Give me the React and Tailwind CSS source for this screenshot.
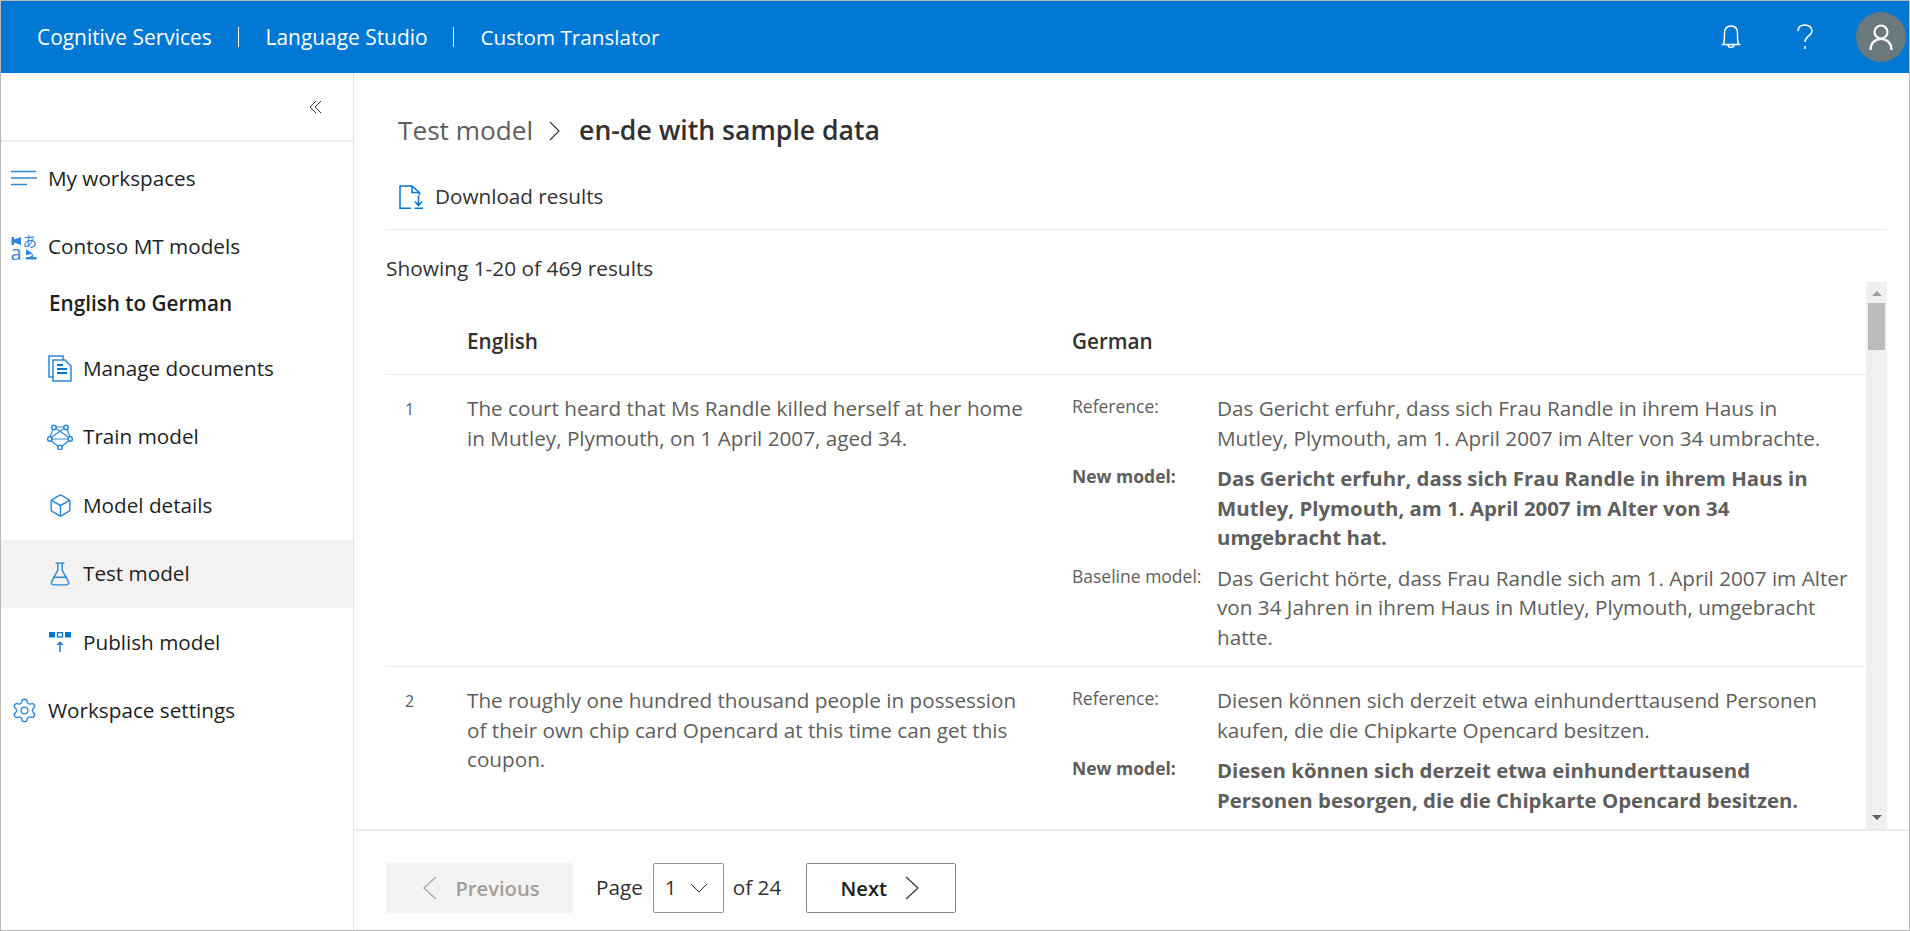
import React from "react"
import { Settings, Box, FlaskConical } from "lucide-react"

const Chevron = ({ w, h, dir = "right", color = "#323130", sw = 1.2, className = "" }) => {
  const paths = {
    right: `M1 1L${w - 1} ${h / 2}L1 ${h - 1}`,
    left: `M${w - 1} 1L1 ${h / 2}L${w - 1} ${h - 1}`,
    down: `M1 1L${w / 2} ${h - 1}L${w - 1} 1`,
  }
  return (
    <svg width={w} height={h} viewBox={`0 0 ${w} ${h}`} fill="none" stroke={color} strokeWidth={sw} className={className}>
      <path d={paths[dir]} />
    </svg>
  )
}

const NavIcon = ({ name }) => {
  if (name === "workspaces") {
    return (
      <svg width="26" height="16" viewBox="0 0 26 16" fill="none" stroke="#2b88d8" strokeWidth="1.6">
        <path d="M0 1.5H25M0 8H26M0 14.5H16" />
      </svg>
    )
  }
  if (name === "translate") {
    return (
      <svg width="26" height="26" viewBox="0 0 26 26" fill="#2b88d8" className="overflow-visible">
        <path d="M0.5 3H3V5.5L10 3V11L3 8.5V11H0.5Z" />
        <text x="11.5" y="12.5" fontSize="14.5" fontFamily="'Noto Sans CJK JP',sans-serif">あ</text>
        <text x="-0.5" y="25.5" fontSize="20" fontFamily="'Open Sans',sans-serif">a</text>
        <path d="M25.5 14V25.5H15V23H19L22 20V23H25.5V14ZM15 15L22 20L15 21Z" />
      </svg>
    )
  }
  if (name === "documents") {
    return (
      <svg width="24" height="27" viewBox="0 0 24 27" fill="none" stroke="#2b88d8" strokeWidth="1.5">
        <path d="M1 1H15V22H1Z" />
        <path d="M5 5H17L23 11V26H5Z" fill="#fff" />
        <path d="M9 10H15M9 14H19M9 18H19" stroke="#0078d4" strokeWidth="1.8" />
      </svg>
    )
  }
  if (name === "train") {
    return (
      <svg width="26" height="26" viewBox="0 0 26 26" fill="none" stroke="#2b88d8" strokeWidth="1.5">
        <path d="M7 3H19L24 15L13 24L2 15Z M7 3L24 15 M19 3L2 15 M2 15H24" strokeWidth="1.2" />
        <circle cx="7" cy="3.5" r="2.2" fill="#fff" />
        <circle cx="19" cy="3.5" r="2.2" fill="#fff" />
        <circle cx="2.8" cy="15" r="2.2" fill="#fff" />
        <circle cx="23.2" cy="15" r="2.2" fill="#fff" />
        <circle cx="13" cy="23.5" r="2.2" fill="#fff" />
      </svg>
    )
  }
  if (name === "details") return <Box size={25} strokeWidth={1.4} color="#2b88d8" />
  if (name === "test") return <FlaskConical size={28} strokeWidth={1.3} color="#2b88d8" />
  if (name === "publish") {
    return (
      <svg width="24" height="24" viewBox="0 0 24 24" fill="none">
        <rect x="1" y="2" width="6" height="5.5" fill="#0078d4" />
        <rect x="9.5" y="2.7" width="5" height="4.3" stroke="#0078d4" strokeWidth="1.3" />
        <rect x="17" y="2" width="6" height="5.5" fill="#0078d4" />
        <path d="M12 22V12.5M9.5 15L12 12.2L14.5 15" stroke="#0078d4" strokeWidth="1.4" />
      </svg>
    )
  }
  return <Settings size={27} strokeWidth={1.2} color="#2b88d8" />
}

const navItems = [
  { label: "My workspaces", icon: "workspaces", top: true },
  { label: "Contoso MT models", icon: "translate", top: true },
  { label: "English to German", heading: true },
  { label: "Manage documents", icon: "documents" },
  { label: "Train model", icon: "train" },
  { label: "Model details", icon: "details" },
  { label: "Test model", icon: "test", active: true },
  { label: "Publish model", icon: "publish" },
  { label: "Workspace settings", icon: "settings", top: true },
]

const Sidebar = () => (
  <aside className="w-[353px] shrink-0 border-r border-[#e6e6e6] flex flex-col">
    <div className="h-[69px] shrink-0 border-b-2 border-[#edebe9] flex items-center justify-end pr-[31px]">
      <Chevron w={8} h={14} dir="left" sw={1} />
      <Chevron w={8} h={14} dir="left" sw={1} className="-ml-[3px]" />
    </div>
    <nav className="pt-[2px]">
      {navItems.map((item) => {
        if (item.heading) {
          return (
            <div key={item.label} className="h-[53px] pl-[48px] pb-[7px] flex items-center font-semibold text-[#201f1e]">
              {item.label}
            </div>
          )
        }
        return (
          <div
            key={item.label}
            className={`h-[68.5px] flex items-center ${item.active ? "bg-[#f3f2f1]" : ""} ${
              item.top ? "pl-[9px]" : "pl-[46px]"
            }`}
          >
            <span className={`flex items-center justify-center shrink-0 ${item.top ? "w-[28px] mr-[10px]" : "w-[26px] mr-[10px]"}`}>
              <NavIcon name={item.icon} />
            </span>
            <span className="text-[#201f1e]">{item.label}</span>
          </div>
        )
      })}
    </nav>
  </aside>
)

const Row = ({ number, source, translations, last }) => (
  <div className={`flex pt-[19px] ${last ? "" : "border-b border-[#edebe9] pb-[3px]"}`}>
    <div className="w-[81px] shrink-0 pl-[19px] pt-[3px] text-[16px] text-[#605e5c]">{number}</div>
    <div className="w-[605px] shrink-0 leading-[29.5px] text-[#605e5c]">{source}</div>
    <div className="flex-1 min-w-0">
      {translations.map((t) => (
        <div key={t.label} className={`flex pb-[11px] text-[#605e5c] ${t.bold ? "font-bold text-[20.4px]" : ""}`}>
          <div className="w-[145px] shrink-0 text-[17.5px] leading-[24px] whitespace-nowrap">{t.label}</div>
          <div className="leading-[29.5px] whitespace-nowrap">{t.text}</div>
        </div>
      ))}
    </div>
  </div>
)

export default function App() {
  return (
    <div className="h-[931px] w-full flex flex-col overflow-hidden border border-[#b8b8b8] bg-white text-[20.7px] font-['Open_Sans','Noto_Sans',sans-serif]">
      <header className="h-[72px] shrink-0 bg-[#0078d4] flex items-center text-white text-[20.9px] pl-[36px] pt-[2px]">
        <span>Cognitive Services</span>
        <span className="w-px h-[20px] bg-white ml-[26px] mr-[27px] -mt-[2px]" />
        <span>Language Studio</span>
        <span className="w-px h-[20px] bg-white ml-[25px] mr-[27px] -mt-[2px]" />
        <span className="text-[20.7px]">Custom Translator</span>
        <div className="ml-auto flex items-center -mt-[2px]">
          <svg width="20" height="24" viewBox="0 0 20 24" fill="none" stroke="#fff" strokeWidth="1.5" className="mr-[56px]">
            <path d="M0.5 19.5H19.5M2.5 19.5C3.5 17 3.5 15 3.5 8.5C3.5 3.5 6 1 10 1C14 1 16.5 3.5 16.5 8.5C16.5 15 16.5 17 17.5 19.5M7 20C7 23 13 23 13 20" />
          </svg>
          <svg width="16" height="26" viewBox="0 0 16 26" fill="none" stroke="#fff" strokeWidth="1.5" className="mr-[43px]">
            <path d="M1 7C1 3 4 1 8 1C12 1 15 3.5 15 7C15 12 8 12 8 18M8 22V25" />
          </svg>
          <div className="w-[50px] h-[50px] rounded-full bg-[#69797e] flex items-center justify-center mr-[3px]">
            <svg width="24" height="28" viewBox="0 0 24 28" fill="none" stroke="#fff" strokeWidth="2.2">
              <circle cx="12" cy="9" r="6.5" />
              <path d="M1.5 27C1.5 20 6 16 12 16C18 16 22.5 20 22.5 27" />
            </svg>
          </div>
        </div>
      </header>

      <div className="flex-1 min-h-0 flex">
        <Sidebar />
        <main className="flex-1 min-w-0 flex flex-col">
          <div className="flex-1 min-h-0 flex flex-col pl-[32px] pr-[22px]">
            <div className="h-[68px] mt-[24px] pl-[12px] shrink-0 flex items-center">
              <span className="text-[26.2px] text-[#605e5c]">Test model</span>
              <Chevron w={11} h={20} sw={1.1} className="ml-[16px] mr-[19px]" />
              <span className="text-[26.6px] font-semibold text-[#323130]">en-de with sample data</span>
            </div>
            <div className="h-[65px] pl-[13px] shrink-0 border-b border-[#edebe9] flex items-center text-[#323130]">
              <svg width="24" height="24" viewBox="0 0 24 24" fill="none" stroke="#0078d4" strokeWidth="1.5" className="mr-[12px]">
                <path d="M12 23.2H1V1H13L20.5 7.5V10M13 1V7.5H20.5" />
                <path d="M19.5 10.5V20M16 16.5L19.5 20.5L23 16.5M15.5 23.2H24" />
              </svg>
              Download results
            </div>
            <div className="h-[52px] shrink-0 pt-[24px] leading-[29px] text-[20.85px] text-[#323130]">Showing 1-20 of 469 results</div>
            <div className="flex-1 min-h-0 flex">
              <div className="flex-1 min-w-0 overflow-hidden">
                <div className="h-[93px] flex items-end border-b border-[#edebe9] pb-[17px] font-semibold text-[#323130]">
                  <div className="w-[81px] shrink-0" />
                  <div className="w-[605px] shrink-0">English</div>
                  <div>German</div>
                </div>
                <Row
                  number="1"
                  source={<>The court heard that Ms Randle killed herself at her home<br />in Mutley, Plymouth, on 1 April 2007, aged 34.</>}
                  translations={[
                    { label: "Reference:", text: <>Das Gericht erfuhr, dass sich Frau Randle in ihrem Haus in<br />Mutley, Plymouth, am 1. April 2007 im Alter von 34 umbrachte.</> },
                    { label: "New model:", bold: true, text: <>Das Gericht erfuhr, dass sich Frau Randle in ihrem Haus in<br />Mutley, Plymouth, am 1. April 2007 im Alter von 34<br />umgebracht hat.</> },
                    { label: "Baseline model:", text: <>Das Gericht hörte, dass Frau Randle sich am 1. April 2007 im Alter<br />von 34 Jahren in ihrem Haus in Mutley, Plymouth, umgebracht<br />hatte.</> },
                  ]}
                />
                <Row
                  number="2"
                  last
                  source={<>The roughly one hundred thousand people in possession<br />of their own chip card Opencard at this time can get this<br />coupon.</>}
                  translations={[
                    { label: "Reference:", text: <>Diesen können sich derzeit etwa einhunderttausend Personen<br />kaufen, die die Chipkarte Opencard besitzen.</> },
                    { label: "New model:", bold: true, text: <>Diesen können sich derzeit etwa einhunderttausend<br />Personen besorgen, die die Chipkarte Opencard besitzen.</> },
                  ]}
                />
              </div>
              <div className="w-[21px] shrink-0 bg-[#f0f0f0] flex flex-col items-center">
                <div className="mt-[9px] w-0 h-0 border-x-[5px] border-x-transparent border-b-[5px] border-b-[#a0a0a0]" />
                <div className="mt-[7px] w-[17px] h-[47px] bg-[#bcbcbc]" />
                <div className="mt-auto mb-[9px] w-0 h-0 border-x-[5px] border-x-transparent border-t-[5px] border-t-[#606060]" />
              </div>
            </div>
          </div>
          <footer className="h-[101px] shrink-0 border-t-2 border-[#edebe9] pl-[32px] pt-[32px]">
            <div className="flex items-center">
              <button className="w-[187px] h-[50px] rounded-[2px] bg-[#f3f2f1] text-[#a19f9d] text-[20.2px] font-semibold flex items-center justify-center gap-[18px] pl-[4px]">
                <Chevron w={14} h={24} dir="left" color="#a19f9d" />
                Previous
              </button>
              <span className="ml-[23px] text-[#323130]">Page</span>
              <div className="ml-[10px] w-[71px] h-[50px] rounded-[2px] border border-[#979593] flex items-center pl-[11px] text-[#323130]">
                1
                <Chevron w={18} h={10} dir="down" sw={1} className="ml-[13px]" />
              </div>
              <span className="ml-[9px] text-[#323130]">of 24</span>
              <button className="ml-[25px] w-[150px] h-[50px] rounded-[2px] border border-[#8a8886] text-[20.2px] font-semibold text-[#201f1e] flex items-center justify-center gap-[18px] pr-[3px]">
                Next
                <Chevron w={14} h={24} />
              </button>
            </div>
          </footer>
        </main>
      </div>
    </div>
  )
}
